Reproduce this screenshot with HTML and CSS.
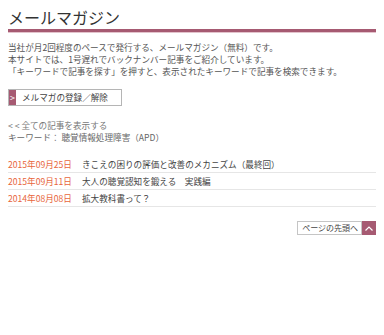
FILE: index.html
```html
<!DOCTYPE html>
<html lang="ja">
<head>
  <meta charset="UTF-8">
  <meta name="viewport" content="width=device-width, initial-scale=1.0">
  <title>メールマガジン</title>
  <link rel="stylesheet" href="styles.css">
</head>
<body>
  <div class="container">
    <h1>メールマガジン</h1>

    <div class="intro">
      <p>当社が月2回程度のペースで発行する、メールマガジン（無料）です。</p>
      <p>本サイトでは、1号遅れでバックナンバー記事をご紹介しています。</p>
      <p>「キーワードで記事を探す」を押すと、表示されたキーワードで記事を検索できます。</p>
    </div>

    <a class="btn-entry" href="#">
      <span class="btn-arrow">&gt;</span>
      <span class="btn-label">メルマガの登録／解除</span>
    </a>

    <div class="filter">
      <a class="show-all" href="#">&lt; &lt; 全ての記事を表示する</a>
      <div class="keyword">キーワード： 聴覚情報処理障害（APD）</div>
    </div>

    <ul class="articles">
      <li><span class="date">2015年09月25日</span><a href="#">きこえの困りの評価と改善のメカニズム（最終回）</a></li>
      <li><span class="date">2015年09月11日</span><a href="#">大人の聴覚認知を鍛える　実践編</a></li>
      <li><span class="date">2014年08月08日</span><a href="#">拡大教科書って？</a></li>
    </ul>

    <div class="pagetop">
      <a href="#">
        <span class="pagetop-label">ページの先頭へ</span>
        <span class="pagetop-icon">
          <svg width="8" height="5" viewBox="0 0 8 5"><polyline points="0.5,4.5 4,1 7.5,4.5" fill="none" stroke="#fff" stroke-width="1.2"/></svg>
        </span>
      </a>
    </div>
  </div>
</body>
</html>
```

FILE: styles.css
```css
body {
  font-family: "Noto Sans CJK JP", "Liberation Sans", sans-serif;
  margin: 0;
  padding: 0 8px;
  color: #555;
  background: #fff;
}

.container {
  max-width: 368px;
}

a {
  color: inherit;
  text-decoration: none;
}

h1 {
  font-size: 16px;
  font-weight: normal;
  color: #333;
  margin: 0;
  padding-top: 5px;
  line-height: 24px;
  border-bottom: 3px solid #a65a72;
  box-shadow: 0 1px 0 #e3c3cc;
}

.intro {
  margin-top: 9px;
  font-size: 8.6px;
  line-height: 12px;
}

.intro p {
  margin: 0;
}

.btn-entry {
  display: flex;
  margin-top: 12px;
  width: 114px;
  height: 17px;
  border: 1px solid #b5b5b5;
  box-sizing: border-box;
  font-size: 8.6px;
  line-height: 15px;
  color: #444;
}

.btn-arrow {
  width: 7px;
  background: #a65a72;
  color: #fff;
  text-align: center;
  font-size: 9px;
}

.btn-label {
  padding-left: 6px;
}

.filter {
  margin-top: 13px;
  font-size: 8.6px;
  line-height: 12px;
}

.show-all {
  color: #777;
}

.keyword {
  color: #666;
}

.articles {
  list-style: none;
  margin: 13px 0 0;
  padding: 0;
  font-size: 8.6px;
}

.articles li {
  display: flex;
  height: 16px;
  line-height: 16px;
  border-bottom: 1px solid #e6e6e6;
}

.articles .date {
  color: #e8663c;
  width: 74px;
}

.articles a {
  color: #444;
}

.pagetop {
  display: flex;
  justify-content: flex-end;
  margin-top: 14px;
}

.pagetop a {
  display: flex;
  height: 14px;
  font-size: 8px;
  line-height: 12px;
  color: #444;
}

.pagetop-label {
  border: 1px solid #c5c5c5;
  padding: 0 3px 0 4px;
}

.pagetop-icon {
  width: 14px;
  background: #a65a72;
  display: flex;
  align-items: center;
  justify-content: center;
}
```
